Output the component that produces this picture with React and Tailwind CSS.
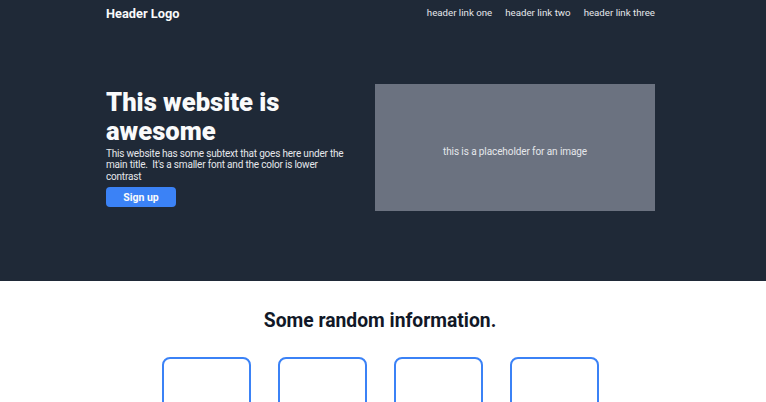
import React from 'react';

const links = ['header link one', 'header link two', 'header link three'];

const App = () => {
  return (
    <div className="min-h-screen bg-white font-['Roboto',sans-serif]">
      <div className="bg-[#1f2937] h-[281px]">
        <div className="w-[549px] ml-[106px] flex items-center justify-between pt-[4px]">
          <div className="text-[12.8px] font-bold text-[#f9fafb]">Header Logo</div>
          <div className="flex gap-[13px] text-[9.7px] text-[#e5e7eb]">
            {links.map((l) => (
              <a key={l}>{l}</a>
            ))}
          </div>
        </div>

        <div className="w-[549px] ml-[106px] mt-[61px] flex items-center justify-between">
          <div className="w-[245px]">
            <h1 className="text-[25.6px] leading-[29px] font-[900] text-[#f9fafb]">
              This website is awesome
            </h1>
            <p className="mt-[2px] text-[10px] tracking-[-0.2px] leading-[11.5px] text-[#e5e7eb]">
              This website has some subtext that goes here under the main title.&nbsp; It's a smaller font and the color is lower contrast
            </p>
            <button className="mt-[5px] w-[70px] h-[20px] rounded-[4px] bg-[#3b82f6] text-[10.5px] font-bold text-[#f9fafb]">
              Sign up
            </button>
          </div>
          <div className="w-[280px] h-[127px] pt-[7px] bg-[#6b7280] flex items-center justify-center text-[10px] tracking-[-0.1px] text-[#e5e7eb]">
            this is a placeholder for an image
          </div>
        </div>
      </div>

      <div className="flex flex-col items-center pr-[6px]">
        <h2 className="mt-[26px] text-[19.3px] font-bold text-[#111827]">Some random information.</h2>
        <div className="mt-[21px] flex gap-[27px]">
          {[0, 1, 2, 3].map((i) => (
            <div key={i} className="w-[89px] h-[89px] rounded-[8px] border-2 border-[#3b82f6]" />
          ))}
        </div>
      </div>
    </div>
  );
};

export default App;
